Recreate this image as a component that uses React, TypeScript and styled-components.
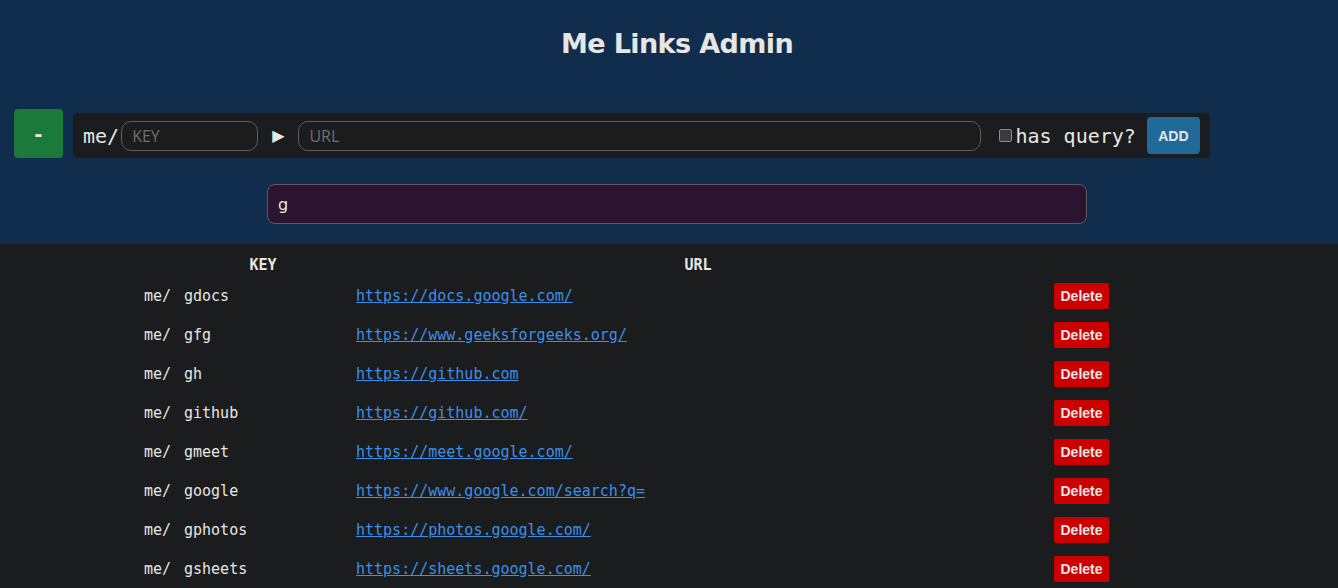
import React from "react";
import styled, { createGlobalStyle } from "styled-components";

const Global = createGlobalStyle`
  html, body { margin: 0; padding: 0; background: #1b1c1e; }
  body { font-family: "DejaVu Sans", sans-serif; color: #e8e6e3; }
`;

const Header = styled.header`
  background: #112d4e;
  height: 244px;
  display: flex;
  flex-direction: column;
  align-items: center;
  padding-left: 16px;
  box-sizing: border-box;
`;

const Title = styled.h1`
  margin: 27px 0 0;
  font-family: "DejaVu Sans", sans-serif;
  font-weight: bold;
  font-size: 27px;
  line-height: 33px;
  color: #e8e6e3;
  letter-spacing: -0.6px;
`;

const FormRow = styled.div`
  align-self: stretch;
  display: flex;
  align-items: flex-end;
  margin: 49px 0 0 -2px;
  gap: 10px;
`;

const MinusButton = styled.button`
  width: 49px;
  height: 49px;
  border: none;
  border-radius: 4px;
  background: #1b7a3a;
  color: #e8e6e3;
  font-family: "DejaVu Sans", sans-serif;
  font-weight: bold;
  font-size: 20px;
  padding: 0;
`;

const Bar = styled.div`
  width: 1137px;
  height: 45px;
  box-sizing: border-box;
  background: #1b1c1e;
  border-radius: 4px;
  display: flex;
  align-items: center;
  padding-left: 10px;
`;

const Mono = styled.span`
  font-family: "DejaVu Sans Mono", monospace;
  font-size: 20px;
  color: #e8e6e3;
`;

const Field = styled.input<{ $w: number }>`
  margin-left: 2px;
  width: ${(p) => p.$w}px;
  height: 30px;
  box-sizing: border-box;
  border: 1px solid #5c5c5c;
  border-radius: 10px;
  background: transparent;
  color: #e8e6e3;
  font-family: "Open Sans", sans-serif;
  font-size: 16px;
  padding: 0 10px;
  outline: none;
  &::placeholder { color: #6f6f6f; }
`;

const Arrow = styled.span`
  margin: 0 12px 0 14px;
  font-size: 16px;
  color: #e8e6e3;
`;

const Check = styled.span`
  width: 11px;
  height: 11px;
  border: 1px solid #8a8a8a;
  border-radius: 2px;
  background: #3b3b3b;
  margin: 0 3px 0 18px;
`;

const AddButton = styled.button`
  margin-left: 11px;
  width: 53px;
  height: 37px;
  border: none;
  border-radius: 4px;
  background: #1f6a99;
  color: #e8e6e3;
  font-family: "Liberation Sans", Arial, sans-serif;
  font-weight: bold;
  font-size: 14px;
  padding: 0;
`;

const Search = styled.input`
  margin-top: 26px;
  width: 820px;
  height: 40px;
  box-sizing: border-box;
  background: #2c1430;
  border: 1px solid #5a5a5a;
  border-radius: 8px;
  color: #e8e6e3;
  font-family: "DejaVu Sans", sans-serif;
  font-size: 16px;
  padding: 0 10px;
  outline: none;
`;

const Table = styled.div`
  display: grid;
  grid-template-columns: 144px 40px 172px 698px 55px;
  grid-template-rows: 32px;
  grid-auto-rows: 39px;
  align-items: center;
  font-family: "DejaVu Sans Mono", monospace;
  font-size: 15px;
  color: #e8e6e3;
`;

const HeadCell = styled.div<{ $col: string; $shift: number }>`
  grid-column: ${(p) => p.$col};
  text-align: center;
  font-weight: bold;
  padding-top: 9px;
  padding-left: ${(p) => Math.max(p.$shift, 0)}px;
  padding-right: ${(p) => Math.max(-p.$shift, 0)}px;
`;

const HeadRow = styled.div`
  display: contents;
`;

const Prefix = styled.div`
  grid-column: 2;
`;

const Cell = styled.div`
  white-space: nowrap;
`;

const Link = styled.a`
  color: #3d8fe8;
  text-decoration: underline;
  white-space: nowrap;
`;

const DeleteButton = styled.button`
  width: 55px;
  height: 26px;
  border: none;
  border-radius: 2px;
  background: #cc0000;
  color: #e8e6e3;
  font-family: "Liberation Sans", Arial, sans-serif;
  font-weight: bold;
  font-size: 14px;
  padding: 0;
`;

const rows: [string, string][] = [
  ["gdocs", "https://docs.google.com/"],
  ["gfg", "https://www.geeksforgeeks.org/"],
  ["gh", "https://github.com"],
  ["github", "https://github.com/"],
  ["gmeet", "https://meet.google.com/"],
  ["google", "https://www.google.com/search?q="],
  ["gphotos", "https://photos.google.com/"],
  ["gsheets", "https://sheets.google.com/"],
];

export default function App() {
  return (
    <>
      <Global />
      <Header>
        <Title>Me Links Admin</Title>
        <FormRow>
          <MinusButton>-</MinusButton>
          <Bar>
            <Mono>me/</Mono>
            <Field $w={137} placeholder="KEY" />
            <Arrow>▶</Arrow>
            <Field $w={683} placeholder="URL" />
            <Check />
            <Mono>has query?</Mono>
            <AddButton>ADD</AddButton>
          </Bar>
        </FormRow>
        <Search defaultValue="g" />
      </Header>
      <Table>
        <HeadRow>
          <HeadCell $col="2 / 4" $shift={26}>KEY</HeadCell>
          <HeadCell $col="4 / 5" $shift={-14}>URL</HeadCell>
          <div />
        </HeadRow>
        {rows.map(([k, u]) => (
          <React.Fragment key={k}>
            <Prefix>me/</Prefix>
            <Cell>{k}</Cell>
            <Cell>
              <Link href="#">{u}</Link>
            </Cell>
            <DeleteButton>Delete</DeleteButton>
          </React.Fragment>
        ))}
      </Table>
    </>
  );
}
